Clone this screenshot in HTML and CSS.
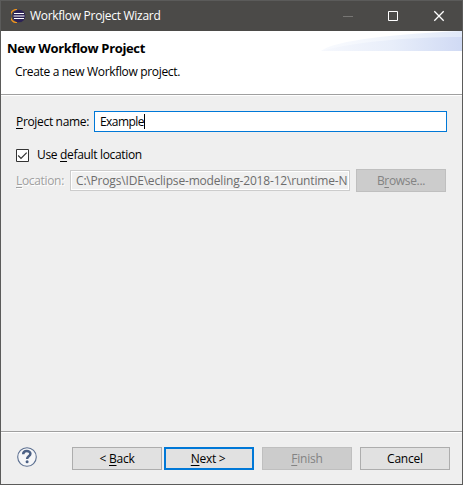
FILE: index.html
```html
<!DOCTYPE html>
<html lang="en">
<head>
<meta charset="utf-8">
<title>Workflow Project Wizard</title>
<link rel="stylesheet" href="styles.css">
</head>
<body>
<div class="window">
  <header class="titlebar">
    <svg class="logo" width="15" height="14" viewBox="0 0 15 14">
      <path d="M6 .4A6.6 6.6 0 0 0 6 13.6" fill="none" stroke="#f0941e" stroke-width="1.3"/>
      <circle cx="8" cy="7" r="6.3" fill="#2c2255"/>
      <path d="M3 4.5h10M2.5 7h11M3 9.5h10" stroke="#fff" stroke-width="1.2"/>
    </svg>
    <span class="caption">Workflow Project Wizard</span>
    <svg class="controls" width="102" height="12" viewBox="0 0 102 12" fill="none">
      <path d="M0 6.5h10" stroke="#777674"/>
      <path d="M45.5 1.5h9v9h-9z" stroke="#fff"/>
      <path d="M91.3 1.3l9.4 9.4M100.7 1.3l-9.4 9.4" stroke="#fff" stroke-width="1.3"/>
    </svg>
  </header>
  <section class="banner">
    <div class="banner-text">
      <h1>New Workflow Project</h1>
      <p>Create a new Workflow project.</p>
    </div>
    <svg class="swoosh" width="141" height="20" viewBox="0 0 141 20">
      <defs>
        <linearGradient id="outer"><stop offset="0" stop-color="#f8fafe"/><stop offset=".5" stop-color="#f1f5fc"/><stop offset="1" stop-color="#e0e8f8"/></linearGradient>
        <linearGradient id="inner"><stop offset="0" stop-color="#f6f8fd"/><stop offset=".5" stop-color="#e8eefa"/><stop offset="1" stop-color="#d0daf4"/></linearGradient>
      </defs>
      <path d="M0 20C14 9 75 3 141 0V20z" fill="url(#outer)"/>
      <path d="M0 20C35 11 85 6 141 6V20z" fill="url(#inner)"/>
    </svg>
  </section>
  <main class="form">
    <div class="row name-row">
      <span class="name-label"><u>P</u>roject name:</span>
      <div class="field name-field"><span>Example</span><i class="caret"></i></div>
    </div>
    <div class="row check-row">
      <svg class="checkbox" width="13" height="13" viewBox="0 0 13 13" fill="none"><path d="M.5.5h12v12H.5z" fill="#fff" stroke="#333"/><path d="M2.2 6.5l2.8 2.8 5.7-5.7" stroke="#333" stroke-width="1.2"/></svg>
      <span class="check-label">Use <u>d</u>efault location</span>
    </div>
    <div class="row location-row">
      <span class="location-label"><u>L</u>ocation:</span>
      <div class="field location-field"><span class="location-value">C:\Progs\IDE\eclipse-modeling-2018-12\runtime-N</span></div>
      <div class="button disabled browse"><span>B<u>r</u>owse...</span></div>
    </div>
  </main>
  <footer class="footer">
    <svg class="help" width="20" height="20" viewBox="0 0 20 20" fill="none">
      <circle cx="10" cy="10" r="9.3" fill="#f5f6f8" stroke="#5d7091" stroke-width="1.1"/>
      <path d="M6.2 7.2C6.2 2.9 13.4 3.1 13.4 6.8c0 2.5-3.3 2.6-3.3 5.1" stroke="#4c6185" stroke-width="2.5"/>
      <circle cx="10.1" cy="14.8" r="1.5" fill="#4c6185"/>
    </svg>
    <div class="button back"><span>&lt; <u>B</u>ack</span></div>
    <div class="button next"><span><u>N</u>ext &gt;</span></div>
    <div class="button disabled finish"><span><u>F</u>inish</span></div>
    <div class="button cancel"><span>Cancel</span></div>
  </footer>
</div>
</body>
</html>
```
FILE: styles.css
```css
* { box-sizing: border-box; }
body {
  margin: 0;
  font: 12px/16px "Open Sans", "Noto Sans", sans-serif;
  letter-spacing: -.33px;
  color: #000;
  white-space: nowrap;
}
u { text-underline-offset: 2px; text-decoration-thickness: 1px; text-decoration-skip-ink: none; }
.window {
  width: 463px;
  height: 485px;
  border: 1px solid #5b5b5a;
  background: #efefef;
  display: flex;
  flex-direction: column;
}
.titlebar {
  height: 30px;
  background: #4b4a48;
  color: #fff;
  display: flex;
  align-items: center;
  padding: 0 17px 0 10px;
}
.caption { margin-left: 4px; letter-spacing: -.29px; }
.controls { margin-left: auto; }
.banner {
  height: 65px;
  background: #fff;
  border-bottom: 1px solid #fff;
  box-shadow: inset 0 -1px #a0a0a0;
  display: flex;
  justify-content: space-between;
}
.banner-text { padding: 9px 0 0 6px; }
h1 { margin: 0; font-size: 13px; line-height: 17px; font-weight: 700; letter-spacing: -.35px; }
p { margin: 7px 0 0 8px; }
.form { padding: 15px 15px 0; flex: 1; }
.row { display: flex; align-items: center; }
.name-label { width: 78px; }
.field { height: 21px; background: #fff; border: 1px solid #0078d7; display: flex; align-items: center; }
.name-field { width: 353px; padding-left: 5px; letter-spacing: -.55px; }
.caret { width: 1px; height: 15px; background: #000; }
.check-row { margin-top: 14px; height: 18px; }
.check-label { margin-left: 8px; }
.location-row { margin-top: 5px; height: 23px; color: #a0a0a0; }
.location-label { width: 54px; text-shadow: 1px 1px #fff; }
.location-field { width: 280px; padding-left: 5px; background: #f0f0f0; border-color: #ccc; box-shadow: inset 0 0 0 1px #fff; color: #6d6d6d; overflow: hidden; }
.location-value { letter-spacing: -.18px; }
.button { width: 90px; height: 23px; border: 1px solid #adadad; background: #e1e1e1; display: flex; align-items: center; justify-content: center; }
.disabled { background: #ccc; border-color: #bfbfbf; color: #838383; }
.browse { margin-left: 6px; }
.footer { height: 53px; border-top: 1px solid #a0a0a0; box-shadow: inset 0 1px #fff; padding: 15px 0 0 16px; display: flex; }
.back { margin-left: 35px; letter-spacing: -.25px; }
.next { margin-left: 2px; border: 2px solid #0078d7; letter-spacing: -.3px; }
.next span { margin-right: 2px; }
.finish { margin-left: 8px; letter-spacing: -.2px; }
.cancel { margin-left: 8px; letter-spacing: -.2px; }
```
